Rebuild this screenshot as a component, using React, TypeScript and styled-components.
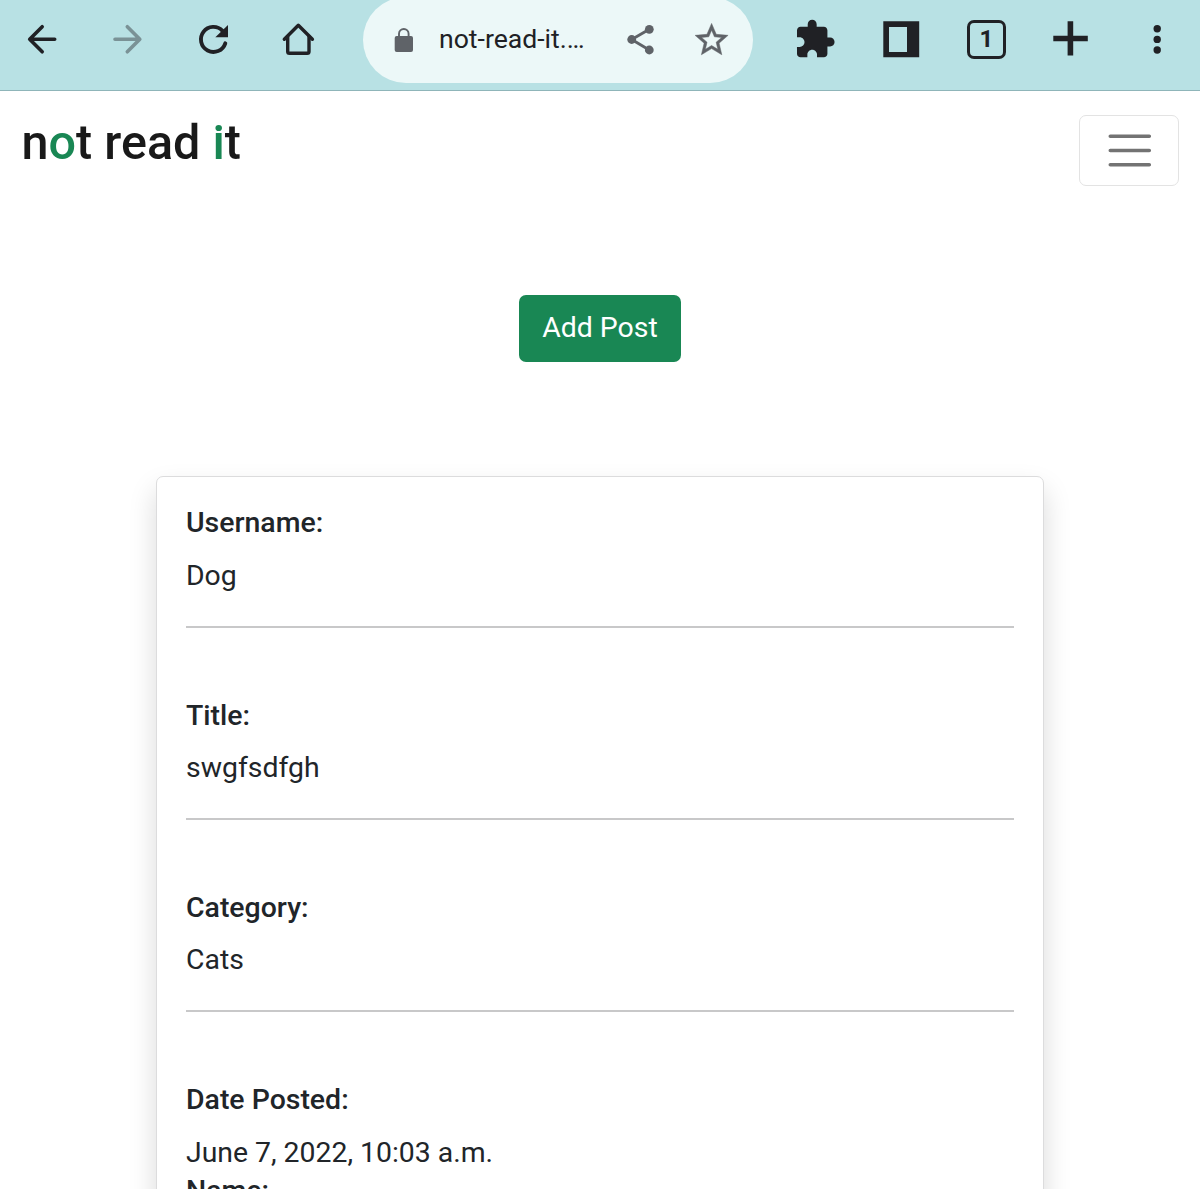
import React from "react";
import styled, { createGlobalStyle } from "styled-components";

const ink = "#202125";
const muted = "#5f6368";
const green = "#198754";
const text = "#212529";

const Global = createGlobalStyle`
  * { box-sizing: border-box; }
  html, body { margin: 0; background: #fff; }
  body {
    font-family: Roboto, "Liberation Sans", sans-serif;
    color: ${text};
    overflow: hidden;
  }
`;

const Screen = styled.div`
  height: 1189px;
  overflow: hidden;
  display: flex;
  flex-direction: column;
`;

const Toolbar = styled.header`
  flex: none;
  height: 91px;
  display: grid;
  grid-template-columns: 85px 86px 85px 85px 432px 85px 86px 85px 85px 86px;
  background: #b8e1e4;
  border-bottom: 1px solid #8fb5b9;
  overflow: hidden;
`;

const ToolIcon = styled.svg<{ $color?: string }>`
  display: block;
  width: 85px;
  height: 90px;
  color: ${(p) => p.$color ?? ink};
  overflow: visible;
`;

const TabSlot = styled.div`
  padding: 20px 0 0 23px;
`;

const TabCount = styled.div`
  width: 39px;
  height: 39px;
  border: 3px solid ${ink};
  border-radius: 7px;
  display: flex;
  align-items: center;
  justify-content: center;
  font-size: 24px;
  line-height: 33px;
  font-weight: 700;
  color: ${ink};
`;

const AddressBar = styled.div`
  height: 86px;
  margin: -3px 20px 0 22px;
  padding: 3px 0 0 30px;
  border-radius: 43px;
  background: #ecf8f8;
  display: grid;
  grid-template-columns: 46px 180px 72px 62px;
`;

const PillIcon = styled.svg`
  display: block;
  width: 46px;
  height: 83px;
  color: ${muted};
  overflow: visible;
`;

const Url = styled.span`
  padding-top: 23px;
  font-size: 26.6px;
  line-height: 32px;
  white-space: nowrap;
  color: ${ink};
`;

const Navbar = styled.nav`
  flex: none;
  height: 120px;
  padding: 24px 21px 0 21.5px;
  display: flex;
  justify-content: space-between;
  align-items: flex-start;
`;

const Brand = styled.h1`
  margin: 0;
  font-size: 48.5px;
  line-height: 56px;
  font-weight: 500;
  color: #191919;
`;

const Accent = styled.span`
  color: ${green};
`;

const Toggler = styled.button`
  width: 100px;
  height: 71px;
  padding: 0;
  border: 1px solid #e3e3e3;
  border-radius: 7px;
  background: #fff;
`;

const Bars = styled.svg`
  display: block;
  width: 98px;
  height: 69px;
`;

const Content = styled.main`
  flex: none;
  padding: 84px 156px 0;
  display: flex;
  flex-direction: column;
  align-items: center;
`;

const AddButton = styled.button`
  width: 162px;
  height: 67px;
  padding: 0 0 2px;
  border: 0;
  border-radius: 7px;
  background: ${green};
  color: #fff;
  font: 400 28.44px/42px Roboto, "Liberation Sans", sans-serif;
  white-space: nowrap;
`;

const Card = styled.section`
  width: 888px;
  height: 900px;
  margin-top: 114px;
  padding: 29.34px 29px 0;
  border: 1px solid #dcdcdd;
  border-radius: 7px;
  background: #fff;
  box-shadow: 0 14px 28px rgba(0, 0, 0, 0.15);
`;

const Field = styled.div<{ $last?: boolean }>`
  height: ${(p) => (p.$last ? "91px" : "192.2px")};
`;

const Label = styled.h2<{ $gap?: number }>`
  margin: 0 0 ${(p) => p.$gap ?? 18.42}px;
  font-size: 28.44px;
  line-height: 34.13px;
  font-weight: 500;
`;

const Value = styled.p`
  margin: 0;
  font-size: 28.38px;
  line-height: 34.13px;
`;

const Rule = styled.hr`
  margin: 33px 0 0;
  border: 0;
  height: 2px;
  background: #c8c8c9;
`;

const fields = [
  { label: "Username:", value: "Dog" },
  { label: "Title:", value: "swgfsdfgh" },
  { label: "Category:", value: "Cats" },
];

const line = {
  fill: "none",
  stroke: "currentColor",
  strokeLinecap: "round" as const,
  strokeLinejoin: "round" as const,
};

export default function App() {
  return (
    <Screen>
      <Global />
      <Toolbar>
        <ToolIcon viewBox="0 0 85 90">
          <path d="M42.2 26.7 29.7 39.3 42.2 51.8M30 39.3H54.7" strokeWidth="3.6" {...line} />
        </ToolIcon>
        <ToolIcon viewBox="0 0 85 90" $color="#7a9296">
          <path d="M42.3 26.7 54.8 39.3 42.3 51.8M54.5 39.3H30" strokeWidth="3.6" {...line} />
        </ToolIcon>
        <ToolIcon viewBox="0 0 85 90">
          <path d="M51.5 30.8A12.5 12.5 0 1 0 54.3 43.3" strokeWidth="3.9" {...line} />
          <path d="M57 25V37.3H44.3Z" fill="currentColor" />
        </ToolIcon>
        <ToolIcon viewBox="0 0 85 90">
          <path d="M28.3 39.2 42.3 25.2 56.4 39.2" strokeWidth="3.4" {...line} />
          <path d="M31.7 36.5V51.5Q31.7 53.3 33.5 53.3H51.2Q53 53.3 53 51.5V36.5" strokeWidth="3.4" {...line} />
        </ToolIcon>
        <AddressBar>
          <PillIcon viewBox="0 0 46 83">
            <rect x="1.7" y="36" width="18.3" height="16" rx="2" fill="currentColor" />
            <path d="M6 37V33.8a4.8 4.8 0 0 1 9.6 0V37" strokeWidth="1.9" {...line} />
          </PillIcon>
          <Url>not-read-it.…</Url>
          <PillIcon viewBox="0 0 46 83">
            <path d="M30.3 29.3 12.7 39.5 30.3 50" strokeWidth="2.9" {...line} />
            <circle cx="30.3" cy="29.3" r="4.4" fill="currentColor" />
            <circle cx="12.7" cy="39.5" r="4.4" fill="currentColor" />
            <circle cx="30.3" cy="50" r="4.4" fill="currentColor" />
          </PillIcon>
          <PillIcon viewBox="0 0 46 83">
            <path
              transform="translate(.8 20.1) scale(1.65)"
              fill="currentColor"
              stroke="currentColor"
              strokeWidth=".3"
              d="M22 9.24l-7.19-.62L12 2 9.19 8.63 2 9.24l5.46 4.73L5.82 21 12 17.27 18.18 21l-1.63-7.03L22 9.24zM12 15.4l-3.76 2.27 1-4.28-3.32-2.88 4.38-.38L12 6.1l1.71 4.04 4.38.38-3.32 2.88 1 4.28L12 15.4z"
            />
          </PillIcon>
        </AddressBar>
        <ToolIcon viewBox="0 0 85 90">
          <path
            transform="translate(20.4 17.9) scale(1.79)"
            fill="currentColor"
            d="M20.5 11H19V7c0-1.1-.9-2-2-2h-4V3.5C13 2.12 11.88 1 10.5 1S8 2.12 8 3.5V5H4c-1.1 0-1.99.9-1.99 2v3.8H3.5c1.49 0 2.7 1.21 2.7 2.7s-1.21 2.7-2.7 2.7H2V20c0 1.1.9 2 2 2h3.8v-1.5c0-1.49 1.21-2.7 2.7-2.7 1.49 0 2.7 1.21 2.7 2.7V22H17c1.1 0 2-.9 2-2v-4h1.5c1.38 0 2.5-1.12 2.5-2.5S21.88 11 20.5 11z"
          />
        </ToolIcon>
        <ToolIcon viewBox="0 0 85 90">
          <path fillRule="evenodd" fill="currentColor" d="M25.3 21.3H61.2V57.2H25.3ZM31 27V52H49V27Z" />
        </ToolIcon>
        <TabSlot>
          <TabCount>1</TabCount>
        </TabSlot>
        <ToolIcon viewBox="0 0 85 90">
          <path d="M24.3 38.5H58.8M41.4 21.3V55.4" stroke="currentColor" strokeWidth="5.6" />
        </ToolIcon>
        <ToolIcon viewBox="0 0 85 90">
          <circle cx="43.2" cy="28.7" r="3.7" fill="currentColor" />
          <circle cx="43.2" cy="39.4" r="3.7" fill="currentColor" />
          <circle cx="43.2" cy="50" r="3.7" fill="currentColor" />
        </ToolIcon>
      </Toolbar>

      <Navbar>
        <Brand>
          n<Accent>o</Accent>t read <Accent>i</Accent>t
        </Brand>
        <Toggler aria-label="Menu">
          <Bars viewBox="0 0 98 69">
            <path d="M30.3 20.2H69.3M30.3 34.5H69.3M30.3 48.7H69.3" stroke="#737373" strokeWidth="3.6" strokeLinecap="round" />
          </Bars>
        </Toggler>
      </Navbar>

      <Content>
        <AddButton>Add Post</AddButton>
        <Card>
          {fields.map((f) => (
            <Field key={f.label}>
              <Label>{f.label}</Label>
              <Value>{f.value}</Value>
              <Rule />
            </Field>
          ))}
          <Field $last>
            <Label $gap={19}>Date Posted:</Label>
            <Value>June 7, 2022, 10:03 a.m.</Value>
          </Field>
          <Label>Name:</Label>
        </Card>
      </Content>
    </Screen>
  );
}
